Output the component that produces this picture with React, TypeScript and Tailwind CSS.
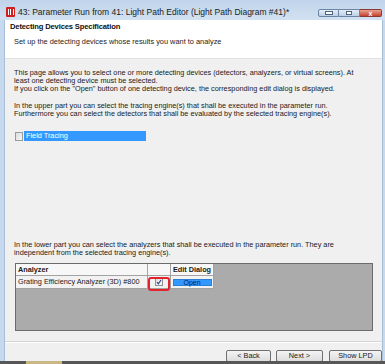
export default function App() {
  return (
    <div className="w-[385px] h-[364px] overflow-hidden flex flex-col bg-[#c6d9ee] font-['Liberation_Sans',Arial,sans-serif] text-black">
      {/* title bar */}
      <div className="h-[20px] shrink-0 flex bg-gradient-to-b from-[#bfd3ea] to-[#d3e2f2]">
        <div className="ml-[6px] mt-[7px] w-[9px] h-[10px] bg-[#d11f1f] rounded-[1px] flex items-center justify-center gap-[1.5px]">
          <div className="w-[1px] h-[6px] bg-white" />
          <div className="w-[1px] h-[6px] bg-white" />
          <div className="w-[1px] h-[6px] bg-white" />
        </div>
        <span className="ml-[3px] mt-[6px] text-[8.5px] leading-[12px] text-[#1b1b1b] whitespace-nowrap">
          43: Parameter Run from 41: Light Path Editor (Light Path Diagram #41)*
        </span>
        <div className="ml-auto mr-[3px] mt-[9px] h-[8px] flex">
          <div className="w-[21px] h-full border border-[#6d84a2] rounded-l-[2px] bg-gradient-to-b from-[#e4edf7] to-[#bccfe5] flex items-end justify-center pb-[1.5px]">
            <div className="w-[6px] h-[2px] bg-white border border-[#4f647f] box-content" />
          </div>
          <div className="w-[21px] h-full border-y border-r border-[#6d84a2] bg-gradient-to-b from-[#e4edf7] to-[#bccfe5] flex items-center justify-center">
            <div className="w-[6px] h-[4px] border border-[#4f647f] bg-white" />
          </div>
          <div className="w-[22px] h-full border-y border-r border-[#8a3a30] rounded-r-[2px] bg-gradient-to-b from-[#e8a293] to-[#c4412e] flex items-center justify-center text-white text-[7px] leading-none font-bold">
            x
          </div>
        </div>
      </div>

      <div className="flex-1 flex min-h-0">
        <div className="w-[5px] shrink-0 bg-[#c6d9ee] border-r border-[#a9bfd8]" />
        <div className="flex-1 min-w-0 flex flex-col">
          {/* header */}
          <div className="h-[38px] shrink-0 bg-white">
            <div className="pt-[2px] pl-[5px] text-[7.6px] leading-[9px] font-bold text-[#111] tracking-[-0.15px]">
              Detecting Devices Specification
            </div>
            <div className="mt-[6px] pl-[9px] text-[7.4px] leading-[9px] text-[#222]">
              Set up the detecting devices whose results you want to analyze
            </div>
          </div>

          {/* body */}
          <div className="flex-1 min-h-0 flex flex-col bg-[#f0f0f0] border-t border-[#e2e2e2] text-[7.3px] leading-[8.2px] text-[#1a1a1a]">
            <div className="pt-[10px] pl-[9px] pr-[12px]">
              <p>
                This page allows you to select one or more detecting devices (detectors, analyzers, or virtual screens). At
                least one detecting device must be selected.
              </p>
              <p>If you click on the "Open" button of one detecting device, the corresponding edit dialog is displayed.</p>
              <p>&nbsp;</p>
              <p>In the upper part you can select the tracing engine(s) that shall be executed in the parameter run.</p>
              <p>Furthermore you can select the detectors that shall be evaluated by the selected tracing engine(s).</p>
            </div>

            <div className="mt-[13px] ml-[10px] h-[10px] flex items-center">
              <div className="w-[8px] h-[9px] border border-[#9a9a9a] bg-gradient-to-br from-[#dcdcdc] to-[#f7f7f7]" />
              <div className="ml-[1px] w-[122px] h-[10px] bg-[#3399ff] text-white pl-[2px] leading-[10px]">
                Field Tracing
              </div>
            </div>

            <div className="flex-1" />

            <div className="pl-[9px] pr-[12px]">
              <p>In the lower part you can select the analyzers that shall be executed in the parameter run. They are</p>
              <p>independent from the selected tracing engine(s).</p>
            </div>

            {/* analyzer grid */}
            <div className="mt-[6px] ml-[10px] mr-[9px] h-[68px] shrink-0 border border-[#6b6b6b] bg-[#ababab] relative">
              <div className="flex h-[12px]">
                <div className="w-[132px] bg-[#f7f7f7] border-r border-b border-[#a3a3a3] pl-[2px] font-bold leading-[11px]">
                  Analyzer
                </div>
                <div className="w-[23px] bg-[#f7f7f7] border-r border-b border-[#a3a3a3]" />
                <div className="w-[43px] bg-[#f7f7f7] border-r border-b border-[#a3a3a3] font-bold leading-[11px] text-center">
                  Edit Dialog
                </div>
              </div>
              <div className="flex h-[13px]">
                <div className="w-[132px] bg-[#f2f2f2] border-r border-b border-[#a3a3a3] pl-[2px] leading-[12px] whitespace-nowrap">
                  Grating Efficiency Analyzer (3D) #800
                </div>
                <div className="w-[23px] bg-[#f2f2f2] border-r border-b border-[#a3a3a3] flex items-center justify-center">
                  <div className="w-[8px] h-[8px] border border-[#8e8f8f] bg-gradient-to-br from-[#dedede] to-[#fafafa] flex items-center justify-center">
                    <svg width="6" height="6" viewBox="0 0 6 6">
                      <path d="M1 3.2 L2.4 4.8 L5 1" fill="none" stroke="#2a3f8f" strokeWidth="1.1" />
                    </svg>
                  </div>
                </div>
                <div className="w-[43px] bg-[#f2f2f2] border-r border-b border-[#a3a3a3] px-[1.5px] pt-[2.5px] pb-[2px]">
                  <div className="h-full bg-[#3399ff] border border-[#2a7fd6] text-[#0b1d3a] text-center leading-[6px] text-[7px]">
                    Open
                  </div>
                </div>
              </div>
              <div className="absolute left-[132px] top-[13px] w-[22px] h-[14px] border-2 border-[#e3232b] rounded-[3px]" />
            </div>

            <div className="mt-[10px] h-[2px] shrink-0 border-t border-[#d5d5d5] border-b border-b-white" />

            <div className="mt-[7px] h-[11px] shrink-0 flex justify-end gap-[5px] text-[7.3px] leading-[9px] text-[#1a1a1a]">
              <div className="w-[45px] h-[12px] border border-[#707070] rounded-[2px] bg-gradient-to-b from-[#f4f4f4] to-[#dddddd] text-center">
                &lt; Back
              </div>
              <div className="w-[47px] h-[12px] border border-[#707070] rounded-[2px] bg-gradient-to-b from-[#f4f4f4] to-[#dddddd] text-center">
                Next &gt;
              </div>
              <div className="ml-[1px] w-[53px] h-[12px] border border-[#707070] rounded-[2px] bg-gradient-to-b from-[#f4f4f4] to-[#dddddd] text-center">
                Show LPD
              </div>
            </div>
          </div>
        </div>
        <div className="w-[3px] shrink-0 bg-[#c6d9ee] border-l border-[#a9bfd8]" />
      </div>

      <div className="h-[3px] shrink-0 bg-[#575757] flex">
        <div className="ml-[26px] w-[36px] bg-[#c9b883]" />
      </div>
    </div>
  );
}
